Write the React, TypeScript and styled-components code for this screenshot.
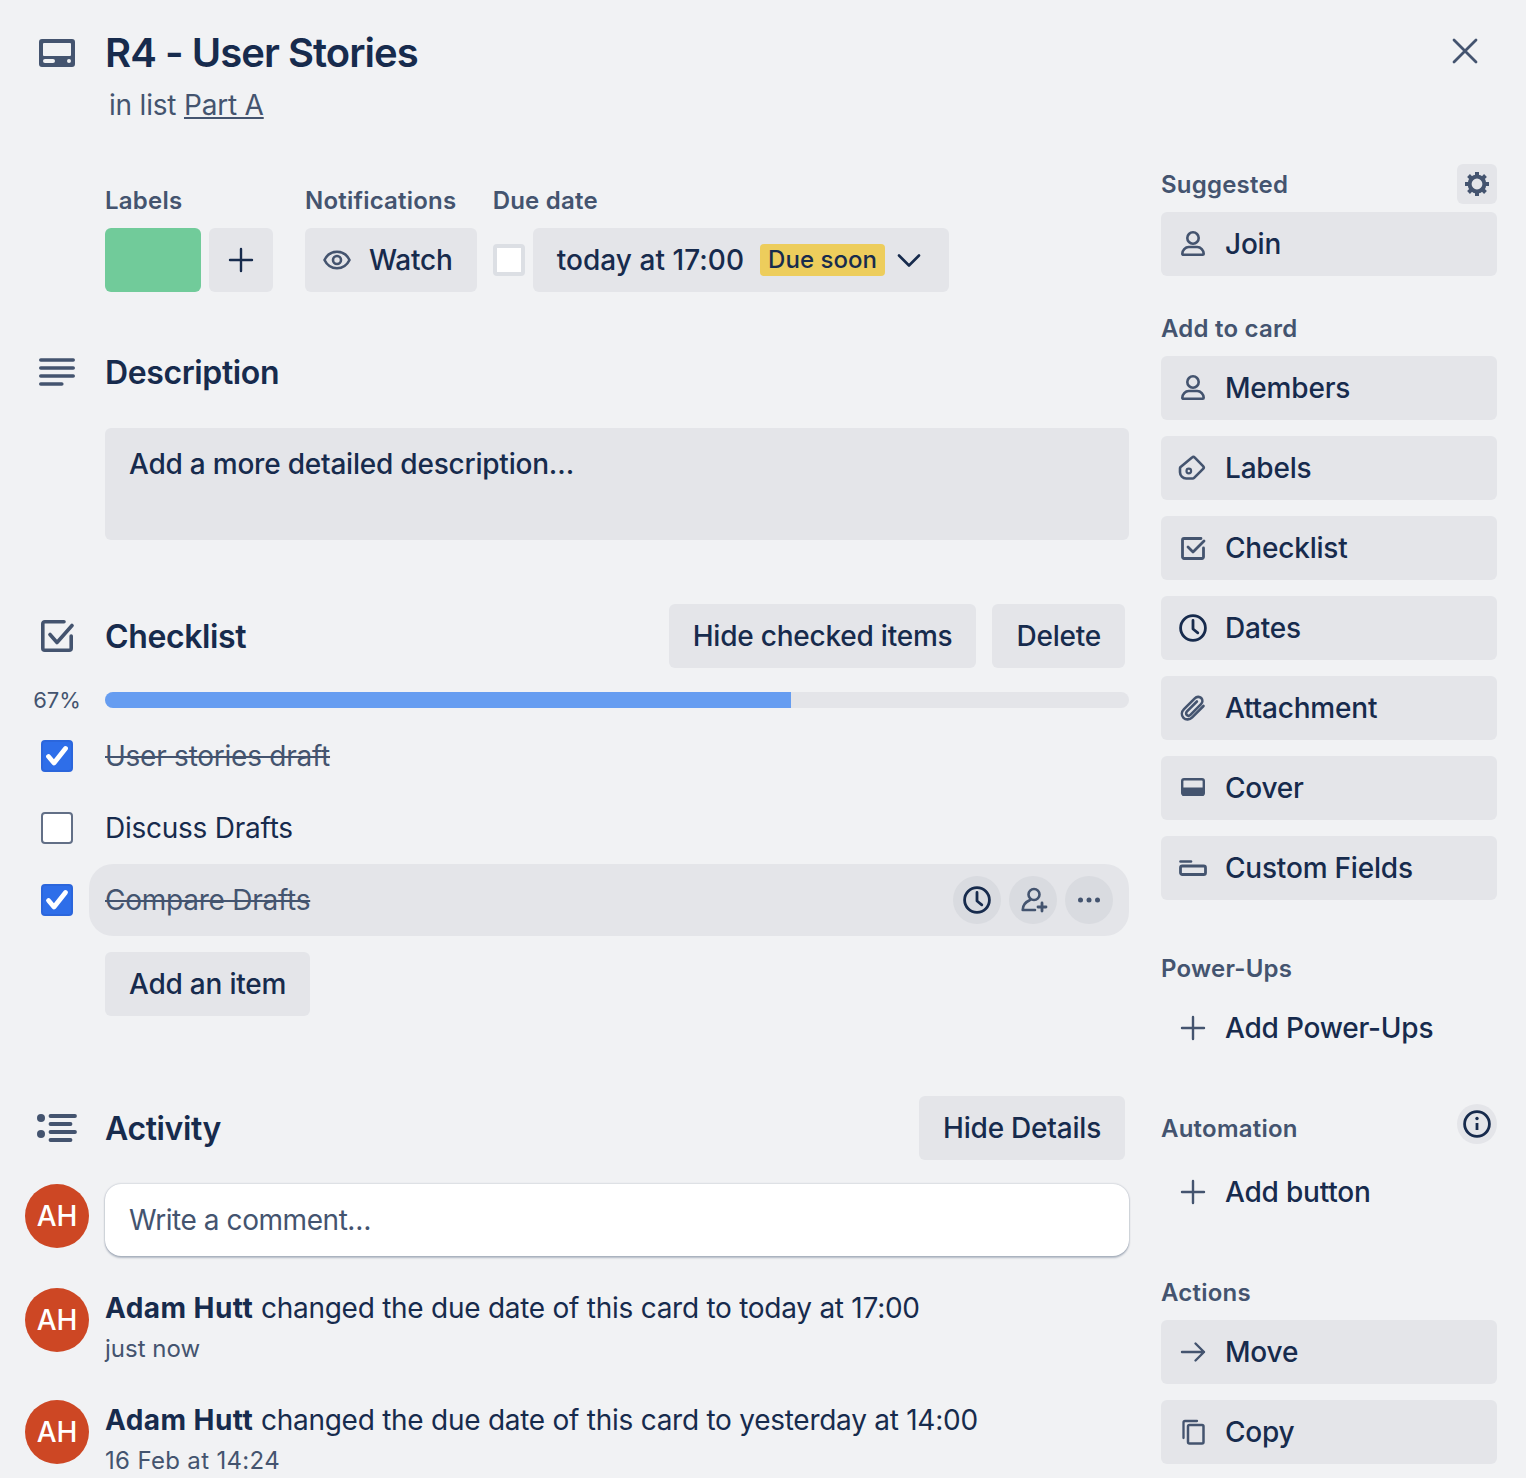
import React from "react";
import styled, { createGlobalStyle } from "styled-components";

const Global = createGlobalStyle`
  html, body { margin: 0; padding: 0; background: #f1f2f4; overflow: hidden; }
  * { box-sizing: border-box; }
  body { font-family: Inter, "Liberation Sans", sans-serif; color: #172b4d; }
`;

const Page = styled.div`
  width: 1526px;
  height: 1478px;
  padding: 29px 29px 0 25px;
  overflow: hidden;
`;
const Header = styled.header`
  display: grid;
  grid-template-columns: 64px 1fr 48px;
  column-gap: 16px;
  height: 135px;
`;
const Gutter = styled.div<{ $h?: number }>`
  height: ${(p) => p.$h ?? 48}px;
  display: flex;
  align-items: center;
  justify-content: center;
`;
const Title = styled.h2`
  margin: 0;
  font-size: 40px;
  line-height: 48px;
  font-weight: 600;
  letter-spacing: -0.95px;
`;
const Sub = styled.p`
  margin: 8px 0 0 4px;
  font-size: 28px;
  line-height: 40px;
  letter-spacing: -0.2px;
  color: #44546f;
  a { color: #44546f; text-decoration: underline; }
`;
const CloseBtn = styled.button`
  width: 48px;
  height: 48px;
  margin: -2px 0 0 -8px;
  padding: 0;
  border: 0;
  background: none;
  display: flex;
  align-items: center;
  justify-content: center;
`;
const Body = styled.div`
  display: flex;
  gap: 32px;
  align-items: flex-start;
`;
const Main = styled.main`
  width: 1104px;
  flex: none;
`;
const Side = styled.aside`
  width: 336px;
  flex: none;
`;
const Meta = styled.div`
  display: flex;
  padding: 20px 0 0 80px;
`;
const MetaGroup = styled.div<{ $after: number }>`
  margin-right: ${(p) => p.$after}px;
`;
const SmallHead = styled.h3<{ $shift: number }>`
  margin: 0;
  padding-top: ${(p) => p.$shift}px;
  font-size: 24px;
  line-height: 32px;
  font-weight: 600;
  letter-spacing: 0.22px;
  color: #44546f;
`;
const MetaRow = styled.div`
  display: flex;
  gap: 8px;
  margin-top: 11px;
  align-items: center;
`;
const Swatch = styled.div`
  width: 96px;
  height: 64px;
  border-radius: 6px;
  background: #71cb9a;
`;
const Btn = styled.button<{ $gap?: number; $pad?: string }>`
  height: 64px;
  border: 0;
  border-radius: 6px;
  background: #e4e5e9;
  color: #172b4d;
  font: 500 28px/40px Inter, "Liberation Sans", sans-serif;
  letter-spacing: -0.22px;
  display: inline-flex;
  align-items: center;
  gap: ${(p) => p.$gap ?? 0}px;
  padding: ${(p) => p.$pad ?? "0 24px"};
  white-space: nowrap;
`;
const SquareBtn = styled(Btn)`
  width: 64px;
  padding: 0;
  justify-content: center;
`;
const DueCheck = styled.span`
  width: 32px;
  height: 32px;
  border: 4px solid #dcdfe4;
  border-radius: 4px;
  background: #fff;
`;
const DueText = styled.span`
  letter-spacing: 0.05px;
`;
const Badge = styled.span`
  height: 32px;
  margin: 0 8px 0 16px;
  padding: 0 8px;
  border-radius: 4px;
  background: #edcd5c;
  font-size: 24px;
  line-height: 32px;
  font-weight: 500;
  letter-spacing: 0.05px;
`;
const SectionHead = styled.div<{ $top: number }>`
  display: grid;
  grid-template-columns: 64px 1fr auto;
  column-gap: 16px;
  align-items: center;
  min-height: 40px;
  margin-top: ${(p) => p.$top}px;
`;
const H3 = styled.h3`
  margin: 0;
  padding-top: 2px;
  font-size: 32px;
  line-height: 38px;
  font-weight: 600;
  letter-spacing: -0.38px;
`;
const Actions = styled.div`
  display: flex;
  gap: 16px;
  padding-right: 4px;
`;
const DescBox = styled.div`
  margin: 36px 0 0 80px;
  height: 112px;
  padding: 16px 24px;
  border-radius: 6px;
  background: #e4e5e9;
  font-size: 28px;
  line-height: 40px;
  font-weight: 500;
  letter-spacing: -0.22px;
`;
const Progress = styled.div`
  display: grid;
  grid-template-columns: 64px 1fr;
  grid-template-rows: 16px;
  column-gap: 16px;
  align-items: center;
  margin-top: 24px;
`;
const Pct = styled.span`
  text-align: center;
  font-size: 22px;
  line-height: 32px;
  color: #44546f;
`;
const Track = styled.div`
  height: 16px;
  border-radius: 8px;
  background: #e4e5e9;
  overflow: hidden;
`;
const Fill = styled.div`
  height: 100%;
  background: #669df1;
`;
const Items = styled.div`
  margin-top: 12px;
`;
const Item = styled.div`
  display: grid;
  grid-template-columns: 64px 1fr;
  height: 72px;
  align-items: center;
`;
const Check = styled.span<{ $on: boolean }>`
  justify-self: center;
  width: 32px;
  height: 32px;
  border-radius: 4px;
  border: 2px solid ${(p) => (p.$on ? "#2b66dc" : "#626f86")};
  background: ${(p) => (p.$on ? "#2e6ee9" : "#fff")};
  display: flex;
  align-items: center;
  justify-content: center;
`;
const ItemBody = styled.div<{ $hover?: boolean }>`
  height: 72px;
  padding: 0 16px;
  border-radius: 24px;
  background: ${(p) => (p.$hover ? "#e4e5e9" : "transparent")};
  display: flex;
  align-items: center;
`;
const ItemText = styled.span<{ $done?: boolean }>`
  flex: 1;
  font-size: 28px;
  line-height: 40px;
  letter-spacing: -0.25px;
  color: ${(p) => (p.$done ? "#44546f" : "#172b4d")};
  text-decoration: ${(p) => (p.$done ? "line-through" : "none")};
`;
const RoundActs = styled.div`
  display: flex;
  gap: 8px;
`;
const Round = styled.span`
  width: 48px;
  height: 48px;
  border-radius: 50%;
  background: #d9dbe0;
  display: flex;
  align-items: center;
  justify-content: center;
`;
const AddItem = styled(Btn)`
  margin: 16px 0 0 80px;
`;
const Feed = styled.div<{ $top: number; $h: number }>`
  display: grid;
  grid-template-columns: 64px 1fr;
  column-gap: 16px;
  margin-top: ${(p) => p.$top}px;
  height: ${(p) => p.$h}px;
`;
const Avatar = styled.span`
  width: 64px;
  height: 64px;
  border-radius: 50%;
  background: #cd4724;
  color: #fff;
  font-size: 28px;
  font-weight: 500;
  display: flex;
  align-items: center;
  justify-content: center;
`;
const Comment = styled.div`
  height: 72px;
  padding: 16px 24px;
  border-radius: 16px;
  background: #fff;
  box-shadow: 0 2px 2px rgba(9, 30, 66, 0.25), 0 0 2px rgba(9, 30, 66, 0.31);
  color: #44546f;
  font-size: 28px;
  line-height: 40px;
  letter-spacing: -0.44px;
`;
const Line = styled.p`
  margin: 0;
  font-size: 28px;
  line-height: 40px;
  letter-spacing: -0.26px;
  white-space: nowrap;
  b { font-weight: 700; letter-spacing: 0.45px; }
`;
const When = styled.p<{ $track?: number }>`
  margin: 5px 0 0;
  font-size: 24px;
  line-height: 32px;
  letter-spacing: ${(p) => p.$track ?? 0}px;
  color: #44546f;
`;
const SideHead = styled.div<{ $top?: number; $rowH?: number }>`
  display: flex;
  align-items: center;
  justify-content: space-between;
  height: ${(p) => p.$rowH ?? 40}px;
  margin-top: ${(p) => p.$top ?? 0}px;
`;
const IconBtn = styled.span<{ $round?: boolean }>`
  width: 40px;
  height: 40px;
  border-radius: ${(p) => (p.$round ? "50%" : "6px")};
  background: #e4e5e9;
  display: flex;
  align-items: center;
  justify-content: center;
`;
const SideBtn = styled.button<{ $top?: number; $plain?: boolean }>`
  width: 336px;
  height: 64px;
  margin-top: ${(p) => p.$top ?? 16}px;
  padding: 0 16px;
  border: 0;
  border-radius: 6px;
  background: ${(p) => (p.$plain ? "transparent" : "#e4e5e9")};
  color: #172b4d;
  font: 500 28px/40px Inter, "Liberation Sans", sans-serif;
  letter-spacing: -0.2px;
  display: flex;
  align-items: center;
  gap: 16px;
`;
const Svg = styled.svg`
  display: block;
  flex: none;
`;

const S = "#44546f";
const D = "#172b4d";

type IP = { c?: string };
const I32 = ({ children, size = 32 }: { children: React.ReactNode; size?: number }) => (
  <Svg width={size} height={size} viewBox="0 0 32 32" fill="none" strokeLinecap="round" strokeLinejoin="round">
    {children}
  </Svg>
);
const Person = () => (
  <I32>
    <circle cx="16" cy="10" r="5.7" stroke={S} strokeWidth="2.6" />
    <path d="M5.300 25.800c0-3.600 3-6.800 6.500-6.800h8.400c3.500 0 6.500 3.200 6.500 6.800 0 .6-.5 1-1 1H6.300c-.5 0-1-.4-1-1Z" stroke={S} strokeWidth="2.6" />
  </I32>
);
const Tag = () => (
  <I32>
    <path d="M15 5.600a2 2 0 0 1 2.800.1l8.300 8.400a2 2 0 0 1 0 2.800l-9 9a2 2 0 0 1-1.400.6H9.200A6.200 6.200 0 0 1 3 20.300v-3.800c0-.6.200-1.100.600-1.500Z" stroke={S} strokeWidth="2.600" />
    <circle cx="11.800" cy="19" r="2.300" stroke={S} strokeWidth="2.200" />
  </I32>
);
const CheckSmall = () => (
  <I32>
    <path d="M24 6.500H7a1.500 1.500 0 0 0-1.500 1.500v17A1.500 1.500 0 0 0 7 26.500h18a1.500 1.500 0 0 0 1.500-1.500V16" stroke={S} strokeWidth="2.800" />
    <path d="M11 15l5 5 11-11" stroke={S} strokeWidth="2.800" />
  </I32>
);
const Clock = ({ size = 32 }: { size?: number }) => (
  <I32 size={size}>
    <circle cx="16" cy="16" r="12.400" stroke={D} strokeWidth="2.800" />
    <path d="M16 8.500V17l4.800 3.800" stroke={D} strokeWidth="2.800" />
  </I32>
);
const Clip = () => (
  <I32>
    <path d="M26.500 14 15.200 25.300c-2.600 2.600-6.400 2.800-8.700.5s-2.100-6 .5-8.600L17.800 6.400c1.900-1.900 4.700-2.100 6.400-.4s1.500 4.500-.4 6.400L13.400 22.800c-1 1-2.600 1.100-3.600.2s-.8-2.600.2-3.600l9.900-9.900" stroke={S} strokeWidth="2.600" />
  </I32>
);
const Cover = () => (
  <I32>
    <rect x="5.200" y="7.200" width="21.600" height="15.600" rx="1.800" stroke={S} strokeWidth="2.400" />
    <path d="M5 15.500h22v7a1.500 1.500 0 0 1-1.500 1.500h-19A1.500 1.500 0 0 1 5 22.500Z" fill={S} />
  </I32>
);
const Fields = () => (
  <I32>
    <path d="M3.500 9.500h10.500" stroke={S} strokeWidth="2.600" />
    <rect x="3.500" y="14" width="25" height="8.500" rx="1.800" stroke={S} strokeWidth="2.800" />
  </I32>
);
const Plus = ({ c = S }: IP) => (
  <I32>
    <path d="M16 5v22M5 16h22" stroke={c} strokeWidth="2.400" />
  </I32>
);
const Arrow = () => (
  <I32>
    <path d="M5 16h22M18.500 7.500 27 16l-8.500 8.500" stroke={S} strokeWidth="2.400" />
  </I32>
);
const Copy = () => (
  <I32>
    <rect x="11" y="9" width="15.500" height="18.500" rx="1.500" stroke={S} strokeWidth="2.500" />
    <path d="M20 5H8a1.500 1.500 0 0 0-1.500 1.500V22" stroke={S} strokeWidth="2.300" />
  </I32>
);
const Gear = () => (
  <I32>
    <circle cx="16" cy="16" r="7.400" stroke={S} strokeWidth="4" />
    {[0, 45, 90, 135, 180, 225, 270, 315].map((a) => (
      <path key={a} d="M16 8V4" stroke={S} strokeWidth="4" strokeLinecap="butt" transform={`rotate(${a} 16 16)`} />
    ))}
  </I32>
);
const Info = () => (
  <I32>
    <circle cx="16" cy="16" r="12.400" stroke={D} strokeWidth="2.800" />
    <path d="M16 15v7" stroke={D} strokeWidth="2.800" strokeLinecap="butt" />
    <circle cx="16" cy="10.500" r="1.700" fill={D} />
  </I32>
);
const Eye = () => (
  <I32>
    <path d="M3.500 16C6 10.800 10.500 7.800 16 7.800S26 10.800 28.500 16C26 21.200 21.500 24.200 16 24.200S6 21.200 3.500 16Z" stroke={S} strokeWidth="2.600" />
    <circle cx="16" cy="16" r="4" stroke={S} strokeWidth="2.600" />
  </I32>
);
const Chevron = () => (
  <I32>
    <path d="M6 11.500 16 21.500 26 11.500" stroke={D} strokeWidth="2.600" />
  </I32>
);
const Close = () => (
  <Svg width="28" height="28" viewBox="0 0 28 28" fill="none">
    <path d="M3 3l22 22M25 3 3 25" stroke={S} strokeWidth="2.800" strokeLinecap="round" />
  </Svg>
);
const CardIcon = () => (
  <Svg width="36" height="28" viewBox="0 0 36 28">
    <path
      fillRule="evenodd"
      fill={S}
      d="M3 0h30a3 3 0 0 1 3 3v22a3 3 0 0 1-3 3H3a3 3 0 0 1-3-3V3a3 3 0 0 1 3-3Zm2 4a1 1 0 0 0-1 1v11a1 1 0 0 0 1 1h26a1 1 0 0 0 1-1V5a1 1 0 0 0-1-1ZM6 20a2 2 0 0 0 0 4h8a2 2 0 0 0 0-4Zm24 0a2 2 0 1 0 0 4 2 2 0 0 0 0-4Z"
    />
  </Svg>
);
const DescIcon = () => (
  <Svg width="36" height="28" viewBox="0 0 36 28" fill="none" stroke={S} strokeWidth="3.600" strokeLinecap="round">
    <path d="M1.800 2h32.400M1.800 10h32.400M1.800 18h32.400M1.800 26h21" />
  </Svg>
);
const ChecklistIcon = () => (
  <Svg width="33" height="32" viewBox="0 0 33 32" fill="none" stroke={S} strokeWidth="3.600" strokeLinecap="round" strokeLinejoin="round">
    <path d="M23 1.800H3.800a2 2 0 0 0-2 2v24.400a2 2 0 0 0 2 2h24.400a2 2 0 0 0 2-2V16" />
    <path d="M9 14.500l7 8L31 5.500" />
  </Svg>
);
const ActivityIcon = () => (
  <Svg width="40" height="28" viewBox="0 0 40 28" fill={S} stroke="none">
    <circle cx="4" cy="4" r="4" />
    <circle cx="4" cy="20" r="4" />
    <path d="M13.500 2h24.500M13.500 10h20M13.500 18h24.500M13.500 26h20" stroke={S} strokeWidth="3.800" strokeLinecap="round" />
  </Svg>
);
const Tick = () => (
  <Svg width="28" height="28" viewBox="0 0 28 28" fill="none">
    <path d="M5.500 14.500 11 21 22.500 6.500" stroke="#fff" strokeWidth="4.800" strokeLinecap="round" strokeLinejoin="round" />
  </Svg>
);
const MemberAdd = () => (
  <I32>
    <circle cx="17" cy="10.500" r="5.500" stroke={S} strokeWidth="2.600" />
    <path d="M13 16C8.500 18 5.700 21.500 5.700 26H18" stroke={S} strokeWidth="2.600" />
    <path d="M25 19v8M21 23h8" stroke={S} strokeWidth="2.800" />
  </I32>
);
const Dots = () => (
  <I32>
    <circle cx="7.500" cy="16" r="2.500" fill={S} />
    <circle cx="16" cy="16" r="2.500" fill={S} />
    <circle cx="24.500" cy="16" r="2.500" fill={S} />
  </I32>
);

const addToCard: [string, React.ReactNode][] = [
  ["Members", <Person />],
  ["Labels", <Tag />],
  ["Checklist", <CheckSmall />],
  ["Dates", <Clock />],
  ["Attachment", <Clip />],
  ["Cover", <Cover />],
  ["Custom Fields", <Fields />],
];

export default function App() {
  return (
    <>
      <Global />
      <Page>
        <Header>
          <Gutter>
            <CardIcon />
          </Gutter>
          <div>
            <Title>R4 - User Stories</Title>
            <Sub>
              in list <a href="#part-a">Part A</a>
            </Sub>
          </div>
          <CloseBtn aria-label="Close">
            <Close />
          </CloseBtn>
        </Header>
        <Body>
          <Main>
            <Meta>
              <MetaGroup $after={32}>
                <SmallHead $shift={1}>Labels</SmallHead>
                <MetaRow>
                  <Swatch />
                  <SquareBtn aria-label="Add label">
                    <Plus c={D} />
                  </SquareBtn>
                </MetaRow>
              </MetaGroup>
              <MetaGroup $after={16}>
                <SmallHead $shift={1}>Notifications</SmallHead>
                <MetaRow>
                  <Btn $gap={16} $pad="0 24px 0 16px">
                    <Eye />
                    Watch
                  </Btn>
                </MetaRow>
              </MetaGroup>
              <MetaGroup $after={0}>
                <SmallHead $shift={1}>Due date</SmallHead>
                <MetaRow>
                  <DueCheck />
                  <Btn $pad="0 24px">
                    <DueText>today at 17:00</DueText>
                    <Badge>Due soon</Badge>
                    <Chevron />
                  </Btn>
                </MetaRow>
              </MetaGroup>
            </Meta>

            <SectionHead $top={60}>
              <Gutter $h={40}>
                <DescIcon />
              </Gutter>
              <H3>Description</H3>
            </SectionHead>
            <DescBox>Add a more detailed description…</DescBox>

            <SectionHead $top={64}>
              <Gutter $h={64}>
                <ChecklistIcon />
              </Gutter>
              <H3>Checklist</H3>
              <Actions>
                <Btn>Hide checked items</Btn>
                <Btn>Delete</Btn>
              </Actions>
            </SectionHead>
            <Progress>
              <Pct>67%</Pct>
              <Track>
                <Fill style={{ width: "67%" }} />
              </Track>
            </Progress>
            <Items>
              <Item>
                <Check $on>
                  <Tick />
                </Check>
                <ItemBody>
                  <ItemText $done>User stories draft</ItemText>
                </ItemBody>
              </Item>
              <Item>
                <Check $on={false} />
                <ItemBody>
                  <ItemText>Discuss Drafts</ItemText>
                </ItemBody>
              </Item>
              <Item>
                <Check $on>
                  <Tick />
                </Check>
                <ItemBody $hover>
                  <ItemText $done>Compare Drafts</ItemText>
                  <RoundActs>
                    <Round>
                      <Clock />
                    </Round>
                    <Round>
                      <MemberAdd />
                    </Round>
                    <Round>
                      <Dots />
                    </Round>
                  </RoundActs>
                </ItemBody>
              </Item>
            </Items>
            <AddItem>Add an item</AddItem>

            <SectionHead $top={80}>
              <Gutter $h={64}>
                <ActivityIcon />
              </Gutter>
              <H3>Activity</H3>
              <Actions>
                <Btn>Hide Details</Btn>
              </Actions>
            </SectionHead>
            <Feed $top={24} $h={72}>
              <Avatar>AH</Avatar>
              <Comment>Write a comment…</Comment>
            </Feed>
            <Feed $top={32} $h={112}>
              <Avatar>AH</Avatar>
              <div>
                <Line>
                  <b>Adam Hutt</b> changed the due date of this card to today at 17:00
                </Line>
                <When>just now</When>
              </div>
            </Feed>
            <Feed $top={0} $h={112}>
              <Avatar>AH</Avatar>
              <div>
                <Line>
                  <b>Adam Hutt</b> changed the due date of this card to yesterday at 14:00
                </Line>
                <When $track={0.33}>16 Feb at 14:24</When>
              </div>
            </Feed>
          </Main>

          <Side>
            <SideHead>
              <SmallHead $shift={2}>Suggested</SmallHead>
              <IconBtn>
                <Gear />
              </IconBtn>
            </SideHead>
            <SideBtn $top={8}>
              <Person />
              Join
            </SideBtn>
            <SideHead $top={32}>
              <SmallHead $shift={2}>Add to card</SmallHead>
            </SideHead>
            {addToCard.map(([label, icon], i) => (
              <SideBtn key={label} $top={i === 0 ? 8 : 16}>
                {icon}
                {label}
              </SideBtn>
            ))}
            <SideHead $top={48}>
              <SmallHead $shift={2}>Power-Ups</SmallHead>
            </SideHead>
            <SideBtn $top={8} $plain>
              <Plus />
              Add Power-Ups
            </SideBtn>
            <SideHead $top={44}>
              <SmallHead $shift={10}>Automation</SmallHead>
              <IconBtn $round>
                <Info />
              </IconBtn>
            </SideHead>
            <SideBtn $top={16} $plain>
              <Plus />
              Add button
            </SideBtn>
            <SideHead $top={48}>
              <SmallHead $shift={2}>Actions</SmallHead>
            </SideHead>
            <SideBtn $top={8}>
              <Arrow />
              Move
            </SideBtn>
            <SideBtn>
              <Copy />
              Copy
            </SideBtn>
          </Side>
        </Body>
      </Page>
    </>
  );
}
